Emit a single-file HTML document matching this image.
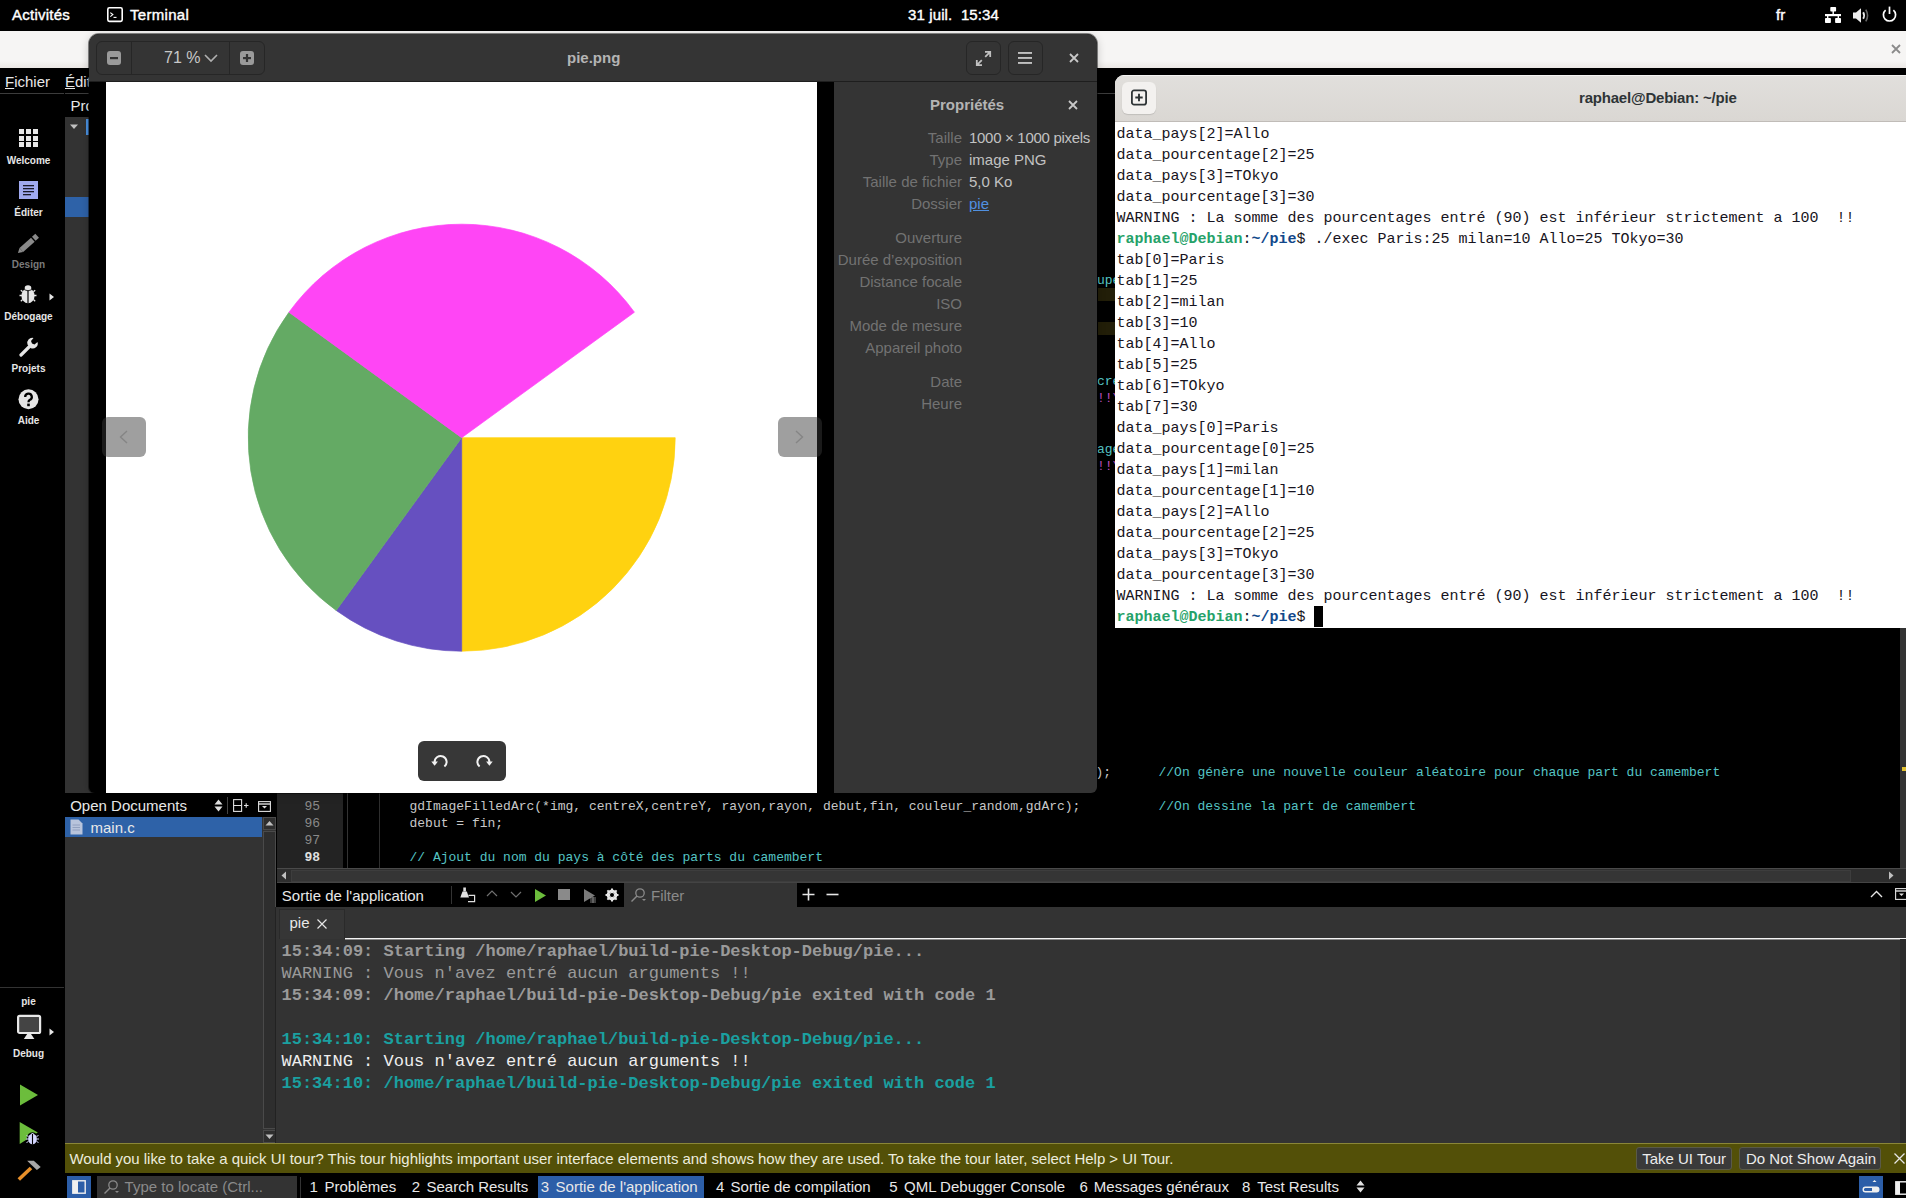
<!DOCTYPE html>
<html><head><meta charset="utf-8">
<style>
*{margin:0;padding:0;box-sizing:border-box}
html,body{width:1906px;height:1198px;overflow:hidden;background:#000;font-family:"Liberation Sans",sans-serif}
.a{position:absolute}
.t{position:absolute;white-space:pre;line-height:1}
.mono{font-family:"Liberation Mono",monospace}
</style></head><body>
<!-- Qt Creator background -->
<div class="a" style="left:0;top:31px;width:1906px;height:37px;background:linear-gradient(#f6f5f4 0,#f6f5f4 30px,#ebe8e5 37px)"></div>
<div class="a" style="left:0;top:68px;width:1906px;height:1130px;background:#000"></div>
<div class="a" style="left:0;top:93px;width:64px;height:1px;background:#3c3c3c"></div><div class="a" style="left:65px;top:93px;width:1841px;height:1px;background:#3c3c3c"></div>
<div class="t" style="left:5px;top:73.8px;font-size:15px;color:#e8e8e8;"><u>F</u>ichier</div><div class="t" style="left:65px;top:73.8px;font-size:15px;color:#e8e8e8;"><u>É</u>dition</div><div class="t" style="left:0;width:57px;text-align:center;top:156.3px;font-size:10px;font-weight:bold;color:#e6e6e6">Welcome</div><div class="t" style="left:0;width:57px;text-align:center;top:208.0px;font-size:10px;font-weight:bold;color:#e6e6e6">Éditer</div><div class="t" style="left:0;width:57px;text-align:center;top:259.9px;font-size:10px;font-weight:bold;color:#7a7a7a">Design</div><div class="t" style="left:0;width:57px;text-align:center;top:312.4px;font-size:10px;font-weight:bold;color:#e6e6e6">Débogage</div><div class="t" style="left:0;width:57px;text-align:center;top:364.1px;font-size:10px;font-weight:bold;color:#e6e6e6">Projets</div><div class="t" style="left:0;width:57px;text-align:center;top:415.7px;font-size:10px;font-weight:bold;color:#e6e6e6">Aide</div>
<div class="a" style="left:19px;top:129.0px;width:5px;height:5px;background:#e6e6e6"></div><div class="a" style="left:26px;top:129.0px;width:5px;height:5px;background:#e6e6e6"></div><div class="a" style="left:33px;top:129.0px;width:5px;height:5px;background:#e6e6e6"></div><div class="a" style="left:19px;top:135.5px;width:5px;height:5px;background:#e6e6e6"></div><div class="a" style="left:26px;top:135.5px;width:5px;height:5px;background:#e6e6e6"></div><div class="a" style="left:33px;top:135.5px;width:5px;height:5px;background:#e6e6e6"></div><div class="a" style="left:19px;top:142.0px;width:5px;height:5px;background:#e6e6e6"></div><div class="a" style="left:26px;top:142.0px;width:5px;height:5px;background:#e6e6e6"></div><div class="a" style="left:33px;top:142.0px;width:5px;height:5px;background:#e6e6e6"></div><div class="a" style="left:19px;top:181px;width:19px;height:18px;background:#a0aaf0"></div><svg class="a" style="left:19px;top:181px" width="19" height="18" viewBox="0 0 19 18" fill="#1a1a2a"><rect x="4" y="4" width="11" height="1.3"/><rect x="4" y="7" width="11" height="1.3"/><rect x="4" y="10" width="11" height="1.3"/><rect x="4" y="13" width="8" height="1.3"/></svg><svg class="a" style="left:14px;top:231px" width="28" height="26" viewBox="0 0 28 26"><g transform="rotate(-42 14 13)" fill="#8a8a8a"><path d="M0.5 13 L5 10.3 V15.7 Z"/><rect x="5" y="10.3" width="15.5" height="5.4"/><rect x="21.8" y="10.3" width="4.5" height="5.4"/></g></svg><svg class="a" style="left:18px;top:284px" width="20" height="20" viewBox="0 0 20 20"><ellipse cx="10" cy="4" rx="3.3" ry="2.8" fill="#e6e6e6"/><ellipse cx="10" cy="11.8" rx="6.6" ry="7.4" fill="#e6e6e6"/><path d="M10 6.2 V19.5" stroke="#000" stroke-width="1.2"/><path d="M6.5 5.8 Q10 7.8 13.5 5.8" fill="none" stroke="#000" stroke-width="0.8"/><path d="M1.5 11.5 H4 M2.8 6.3 L4.6 7.8 M2.8 17.2 L4.6 15.6 M18.5 11.5 H16 M17.2 6.3 L15.4 7.8 M17.2 17.2 L15.4 15.6" stroke="#e6e6e6" stroke-width="1.3"/></svg><svg class="a" style="left:49px;top:293px" width="6" height="8" viewBox="0 0 6 8"><path d="M0.5 0.5 L5 4 L0.5 7.5 Z" fill="#e6e6e6"/></svg><svg class="a" style="left:18px;top:336px" width="21" height="21" viewBox="0 0 21 21"><path d="M3 19 L11.5 10.5" stroke="#e6e6e6" stroke-width="3.2" stroke-linecap="round"/><path d="M9.5 8.5 A5 5 0 0 1 15.5 2 L13 5 L14 7.5 L16.5 8.5 L19.5 6 A5 5 0 0 1 12.5 12 Z" fill="#e6e6e6"/></svg><svg class="a" style="left:18px;top:388.5px" width="21" height="21" viewBox="0 0 21 21"><circle cx="10.5" cy="10.2" r="10" fill="#e6e6e6"/><path d="M7.2 8 A3.3 3.3 0 1 1 11.6 11 Q10.5 11.6 10.5 13.2" fill="none" stroke="#000" stroke-width="2.3"/><rect x="9.2" y="14.6" width="2.6" height="2.6" fill="#000"/></svg>
<div class="a" style="left:0;top:987px;width:64px;height:1px;background:#333"></div><div class="t" style="left:0;width:57px;text-align:center;top:996.5px;font-size:10px;font-weight:bold;color:#e6e6e6">pie</div><svg class="a" style="left:16px;top:1014px" width="26" height="26" viewBox="0 0 26 26"><rect x="2.1" y="1.8" width="22" height="17.2" rx="1.6" fill="#444" stroke="#e8e8e8" stroke-width="2.2"/><path d="M7.8 25 L11.2 20 H15 L18.4 25 Z" fill="#e8e8e8"/></svg><svg class="a" style="left:49px;top:1028px" width="6" height="8" viewBox="0 0 6 8"><path d="M0.5 0.5 L5 4 L0.5 7.5 Z" fill="#e6e6e6"/></svg><div class="t" style="left:0;width:57px;text-align:center;top:1049.0px;font-size:10px;font-weight:bold;color:#e6e6e6">Debug</div><svg class="a" style="left:19px;top:1084px" width="20" height="22" viewBox="0 0 20 22"><path d="M1 0.5 L19 11 L1 21.5 Z" fill="#6cbd3c"/></svg><svg class="a" style="left:19px;top:1121px" width="22" height="25" viewBox="0 0 22 25"><path d="M0.7 0.9 L18.8 11.5 L0.7 23 Z" fill="#6cbd3c"/><ellipse cx="13.5" cy="17.5" rx="5.8" ry="6.3" fill="#000"/><ellipse cx="13.5" cy="18" rx="4.4" ry="5.2" fill="#d4d6ff"/><circle cx="13.5" cy="13.5" r="1.6" fill="#d4d6ff"/><path d="M13.5 13 V23.5" stroke="#000" stroke-width="1.1"/><path d="M7.5 14.5 L9.5 15.5 M7 18 H9.3 M7.5 21.5 L9.5 20.5 M19.5 14.5 L17.5 15.5 M20 18 H17.7 M19.5 21.5 L17.5 20.5" stroke="#d4d6ff" stroke-width="1"/></svg><svg class="a" style="left:16px;top:1158px" width="26" height="24" viewBox="0 0 26 24"><path d="M2.8 21.5 L15 10" stroke="#e8902a" stroke-width="3.6"/><path d="M11.2 2.7 H17.8 L24.7 9 L20.9 12 L15 6.5 Z" fill="#a8a8a8"/></svg>
<div class="t" style="left:70.5px;top:98px;font-size:15px;color:#e8e8e8;">Projets</div><div class="a" style="left:65px;top:117px;width:210px;height:676px;background:#333"></div><svg class="a" style="left:69px;top:124px" width="10" height="6" viewBox="0 0 10 6"><path d="M1 0.5 H9 L5 5 Z" fill="#c0c0c0"/></svg><div class="a" style="left:86px;top:119px;width:3px;height:16px;background:#4a90e0"></div><div class="a" style="left:65px;top:197px;width:210px;height:20px;background:#2e62a8"></div>
<div class="t" style="left:70.2px;top:797.8px;font-size:15px;color:#e8e8e8;">Open Documents</div><svg class="a" style="left:214px;top:799px" width="9" height="13" viewBox="0 0 9 13"><path d="M0.5 5.5 L4.5 0.5 L8.5 5.5 Z M0.5 7.5 H8.5 L4.5 12.5 Z" fill="#e0e0e0"/></svg><div class="a" style="left:227px;top:797px;width:1px;height:17px;background:#444"></div><svg class="a" style="left:233px;top:799px" width="16" height="13" viewBox="0 0 16 13" fill="none" stroke="#e0e0e0" stroke-width="1.1"><rect x="0.6" y="0.6" width="8" height="11.8"/><path d="M0.6 6.5 H8.6 M11 6.5 H15.5 M13.2 4.2 V8.8"/></svg><svg class="a" style="left:258px;top:801px" width="13" height="11" viewBox="0 0 13 11"><rect x="0.6" y="0.6" width="11.8" height="9.8" fill="none" stroke="#e0e0e0" stroke-width="1.1"/><path d="M0.6 3 H12.4" stroke="#e0e0e0" stroke-width="1.4"/><path d="M4 5 H9 L6.5 7.5 Z" fill="#e0e0e0"/></svg><div class="a" style="left:65px;top:817px;width:211px;height:326px;background:#333"></div><div class="a" style="left:65px;top:817px;width:197px;height:20px;background:#2e62a8"></div><svg class="a" style="left:70px;top:819px" width="13" height="16" viewBox="0 0 13 16"><path d="M0.5 0.5 H8.5 L12.5 4.5 V15.5 H0.5 Z" fill="#b8c4dc"/><path d="M2.5 6 H10 M2.5 8.5 H10 M2.5 11 H10" stroke="#8898b8" stroke-width="0.8"/></svg><div class="t" style="left:90.5px;top:819.8px;font-size:15px;color:#e8e8e8;">main.c</div><div class="a" style="left:263px;top:817px;width:13px;height:13px;background:#2e2e2e;border:1px solid #4a4a4a"></div><div class="a" style="left:263px;top:831px;width:13px;height:298px;background:#2e2e2e;border:1px solid #4a4a4a"></div><div class="a" style="left:263px;top:1130px;width:13px;height:13px;background:#2e2e2e;border:1px solid #4a4a4a"></div><svg class="a" style="left:264px;top:819px" width="11" height="8" viewBox="0 0 11 8"><path d="M1.5 6.5 H9.5 L5.5 2 Z" fill="#c0c0c0"/></svg><svg class="a" style="left:264px;top:1133px" width="11" height="8" viewBox="0 0 11 8"><path d="M1.5 1.5 H9.5 L5.5 6 Z" fill="#c0c0c0"/></svg>
<div class="a" style="left:277px;top:793px;width:66px;height:75px;background:#232323"></div><div class="a" style="left:347px;top:793px;width:1px;height:75px;background:#333"></div><div class="a" style="left:379px;top:793px;width:1px;height:75px;background:#2e2e2e"></div><div class="t mono" style="left:270px;width:50px;text-align:right;top:799.7px;font-size:13px;color:#8a8a8a;">95</div><div class="t mono" style="left:270px;width:50px;text-align:right;top:816.6px;font-size:13px;color:#8a8a8a;">96</div><div class="t mono" style="left:270px;width:50px;text-align:right;top:833.5px;font-size:13px;color:#8a8a8a;">97</div><div class="t mono" style="left:270px;width:50px;text-align:right;top:850.6px;font-size:13px;color:#e0e0e0;font-weight:bold;">98</div><div class="t mono" style="left:1095.5px;top:765.7px;font-size:13px;color:#c8c8c8;">);</div><div class="t mono" style="left:1158.5px;top:765.7px;font-size:13px;color:#55c4c4;">//On génère une nouvelle couleur aléatoire pour chaque part du camembert</div><div class="t mono" style="left:409.5px;top:799.7px;font-size:13px;color:#c8c8c8;">gdImageFilledArc(*img, centreX,centreY, rayon,rayon, debut,fin, couleur_random,gdArc);</div><div class="t mono" style="left:1158.5px;top:799.7px;font-size:13px;color:#55c4c4;">//On dessine la part de camembert</div><div class="t mono" style="left:409.5px;top:816.6px;font-size:13px;color:#c8c8c8;">debut = fin;</div><div class="t mono" style="left:409.5px;top:850.6px;font-size:13px;color:#55c4c4;">// Ajout du nom du pays à côté des parts du camembert</div><div class="t mono" style="left:1097px;top:274.0px;font-size:13px;color:#55c4c4;">upe</div><div class="a" style="left:1098px;top:288px;width:17px;height:13px;background:#221e08"></div><div class="a" style="left:1098px;top:322px;width:17px;height:13px;background:#221e08"></div><div class="t mono" style="left:1097px;top:375.0px;font-size:13px;color:#55c4c4;">cré</div><div class="t mono" style="left:1097px;top:392.0px;font-size:13px;color:#c050c0;">!!\</div><div class="t mono" style="left:1097px;top:443.0px;font-size:13px;color:#55c4c4;">age</div><div class="t mono" style="left:1097px;top:460.0px;font-size:13px;color:#c050c0;">!!\</div><div class="a" style="left:1900px;top:628px;width:6px;height:240px;background:#333"></div><div class="a" style="left:1902px;top:767px;width:4px;height:4px;background:#e0c030"></div><div class="a" style="left:277px;top:868px;width:1629px;height:15px;background:#2e2e2e;border-top:1px solid #4a4a4a;border-bottom:1px solid #444"></div><div class="a" style="left:291px;top:870px;width:1560px;height:12px;background:#353535;border:1px solid #3d3d3d"></div><svg class="a" style="left:279px;top:870px" width="10" height="11" viewBox="0 0 10 11"><path d="M7 1.5 V9.5 L2.5 5.5 Z" fill="#c0c0c0"/></svg><svg class="a" style="left:1886px;top:870px" width="10" height="11" viewBox="0 0 10 11"><path d="M3 1.5 V9.5 L7.5 5.5 Z" fill="#c0c0c0"/></svg>
<div class="a" style="left:277px;top:883px;width:1629px;height:24px;background:#000"></div><div class="t" style="left:281.8px;top:887.9px;font-size:15px;color:#e8e8e8;">Sortie de l'application</div><div class="a" style="left:451px;top:886px;width:1px;height:18px;background:#333"></div><svg class="a" style="left:460px;top:887px" width="17" height="16" viewBox="0 0 17 16"><rect x="3.3" y="0.5" width="2.6" height="4" fill="#e0e0e0"/><path d="M2.5 4.5 H6.8 L9 10.5 H0.3 Z" fill="#e0e0e0"/><path d="M8.5 8.3 H14.6 V14.6 H8" fill="none" stroke="#e0e0e0" stroke-width="1.2"/></svg><svg class="a" style="left:486px;top:889px" width="12" height="8" viewBox="0 0 12 8"><path d="M1 7 L6 2 L11 7" fill="none" stroke="#707070" stroke-width="1.2"/></svg><svg class="a" style="left:510px;top:891px" width="12" height="8" viewBox="0 0 12 8"><path d="M1 1 L6 6 L11 1" fill="none" stroke="#707070" stroke-width="1.2"/></svg><svg class="a" style="left:534px;top:888px" width="13" height="15" viewBox="0 0 13 15"><path d="M1 1 L12 7.5 L1 14 Z" fill="#6cbd3c"/></svg><div class="a" style="left:558px;top:889px;width:12px;height:11px;background:#8a8a8a"></div><svg class="a" style="left:583px;top:888px" width="14" height="15" viewBox="0 0 14 15"><path d="M1 1 L12 7.5 L1 14 Z" fill="#7a7a7a"/><path d="M7 10 H13 M7 12 H13 M7 14 H13 M10 9 V15" stroke="#999" stroke-width="0.8"/></svg><svg class="a" style="left:605px;top:888px" width="14" height="14" viewBox="0 0 14 14"><circle cx="7" cy="7" r="4.2" fill="none" stroke="#e6e6e6" stroke-width="2.4"/><path d="M7 0.5 V13.5 M0.5 7 H13.5 M2.4 2.4 L11.6 11.6 M11.6 2.4 L2.4 11.6" stroke="#e6e6e6" stroke-width="2"/><circle cx="7" cy="7" r="2" fill="#000"/></svg><div class="a" style="left:624px;top:883px;width:173px;height:24px;background:#333"></div><svg class="a" style="left:630px;top:887px" width="17" height="16" viewBox="0 0 17 16"><circle cx="10" cy="6" r="4.2" fill="none" stroke="#8a8a8a" stroke-width="1.3"/><path d="M7 9 L1.5 14.5" stroke="#8a8a8a" stroke-width="1.5"/><path d="M12 12 H16 L14 14 Z" fill="#8a8a8a"/></svg><div class="t" style="left:651px;top:888.3px;font-size:15px;color:#8a8a8a;">Filter</div><svg class="a" style="left:802px;top:888px" width="13" height="13" viewBox="0 0 13 13"><path d="M6.5 0.5 V12.5 M0.5 6.5 H12.5" stroke="#e6e6e6" stroke-width="1.6"/></svg><svg class="a" style="left:826px;top:888px" width="13" height="13" viewBox="0 0 13 13"><path d="M0.5 6.5 H12.5" stroke="#e6e6e6" stroke-width="1.6"/></svg><svg class="a" style="left:1870px;top:889px" width="13" height="9" viewBox="0 0 13 9"><path d="M1 8 L6.5 2.5 L12 8" fill="none" stroke="#e6e6e6" stroke-width="1.4"/></svg><svg class="a" style="left:1895px;top:888px" width="11" height="12" viewBox="0 0 11 12"><rect x="0.6" y="0.6" width="12" height="10.8" fill="none" stroke="#e0e0e0" stroke-width="1.1"/><path d="M0.6 3 H12" stroke="#e0e0e0" stroke-width="1.4"/><path d="M4 5.5 H9 L6.5 8 Z" fill="#e0e0e0"/></svg>
<div class="a" style="left:276px;top:907px;width:1630px;height:236px;background:#333"></div><div class="a" style="left:275px;top:907px;width:1px;height:236px;background:#222"></div><div class="a" style="left:279px;top:909px;width:66px;height:30px;background:#363636;border:1px solid #2a2a2a;border-bottom:none"></div><div class="t" style="left:289.5px;top:915.3px;font-size:15px;color:#e8e8e8;">pie</div><svg class="a" style="left:316px;top:918px" width="12" height="12" viewBox="0 0 12 12"><path d="M1.5 1.5 L10.5 10.5 M10.5 1.5 L1.5 10.5" stroke="#e6e6e6" stroke-width="1.2"/></svg><div class="a" style="left:345px;top:938px;width:1561px;height:1px;background:#f4f4f4"></div><div class="a" style="left:345px;top:939px;width:1561px;height:1px;background:#888"></div><div class="t mono" style="left:281.5px;top:942.7px;font-size:17px;color:#9a9a9a;font-weight:bold;">15:34:09: Starting /home/raphael/build-pie-Desktop-Debug/pie...</div><div class="t mono" style="left:281.5px;top:964.7px;font-size:17px;color:#9a9a9a;">WARNING : Vous n'avez entré aucun arguments !!</div><div class="t mono" style="left:281.5px;top:986.7px;font-size:17px;color:#9a9a9a;font-weight:bold;">15:34:09: /home/raphael/build-pie-Desktop-Debug/pie exited with code 1</div><div class="t mono" style="left:281.5px;top:1030.8px;font-size:17px;color:#1aa0a0;font-weight:bold;">15:34:10: Starting /home/raphael/build-pie-Desktop-Debug/pie...</div><div class="t mono" style="left:281.5px;top:1052.9px;font-size:17px;color:#eeeeee;">WARNING : Vous n'avez entré aucun arguments !!</div><div class="t mono" style="left:281.5px;top:1074.6px;font-size:17px;color:#1aa0a0;font-weight:bold;">15:34:10: /home/raphael/build-pie-Desktop-Debug/pie exited with code 1</div><div class="a" style="left:1900px;top:939px;width:6px;height:204px;background:#2b2b2b"></div>
<div class="a" style="left:65px;top:1143px;width:1841px;height:30px;background:#535008;border-top:1px solid #8a8638"></div><div class="t" style="left:69.4px;top:1151.1px;font-size:15px;color:#ececdc;letter-spacing:-0.035px">Would you like to take a quick UI tour? This tour highlights important user interface elements and shows how they are used. To take the tour later, select Help &gt; UI Tour.</div><div class="a" style="left:1636px;top:1147px;width:96px;height:23px;background:#3a3a3a;border:1px solid #5a5a48;border-radius:3px"></div><div class="t" style="left:1642.2px;top:1151.1px;font-size:15px;color:#ececec;">Take UI Tour</div><div class="a" style="left:1739px;top:1147px;width:142px;height:23px;background:#3a3a3a;border:1px solid #5a5a48;border-radius:3px"></div><div class="t" style="left:1746px;top:1151.1px;font-size:15px;color:#ececec;">Do Not Show Again</div><svg class="a" style="left:1893px;top:1152px" width="13" height="13" viewBox="0 0 13 13"><path d="M1.5 1.5 L11.5 11.5 M11.5 1.5 L1.5 11.5" stroke="#e6e6e6" stroke-width="1.3"/></svg>
<div class="a" style="left:67px;top:1176px;width:24px;height:22px;background:#2c5ea8"></div><svg class="a" style="left:72px;top:1180px" width="14" height="14" viewBox="0 0 14 14"><rect x="0.8" y="0.8" width="12.4" height="12.4" fill="none" stroke="#f0f0f0" stroke-width="1.4"/><rect x="1" y="1" width="5" height="12" fill="#f0f0f0"/></svg><div class="a" style="left:97px;top:1176px;width:200px;height:22px;background:#333"></div><svg class="a" style="left:103px;top:1179px" width="17" height="16" viewBox="0 0 17 16"><circle cx="10" cy="6" r="4.2" fill="none" stroke="#8a8a8a" stroke-width="1.3"/><path d="M7 9 L1.5 14.5" stroke="#8a8a8a" stroke-width="1.5"/><path d="M12 12 H16 L14 14 Z" fill="#8a8a8a"/></svg><div class="t" style="left:124.6px;top:1179.3px;font-size:15px;color:#8a8a8a;">Type to locate (Ctrl...</div><div class="a" style="left:300px;top:1177px;width:1px;height:21px;background:#333"></div><div class="a" style="left:538px;top:1176px;width:166px;height:22px;background:#2c5ea8"></div><div class="t" style="left:309.4px;top:1179.3px;font-size:15px;color:#e8e8e8;">1</div><div class="t" style="left:324.5px;top:1179.3px;font-size:15px;color:#e8e8e8;">Problèmes</div><div class="t" style="left:411.7px;top:1179.3px;font-size:15px;color:#e8e8e8;">2</div><div class="t" style="left:426.5px;top:1179.3px;font-size:15px;color:#e8e8e8;">Search Results</div><div class="t" style="left:540.8px;top:1179.3px;font-size:15px;color:#e8e8e8;">3</div><div class="t" style="left:555.6px;top:1179.3px;font-size:15px;color:#e8e8e8;">Sortie de l'application</div><div class="t" style="left:716px;top:1179.3px;font-size:15px;color:#e8e8e8;">4</div><div class="t" style="left:730.6px;top:1179.3px;font-size:15px;color:#e8e8e8;">Sortie de compilation</div><div class="t" style="left:889.2px;top:1179.3px;font-size:15px;color:#e8e8e8;">5</div><div class="t" style="left:904px;top:1179.3px;font-size:15px;color:#e8e8e8;">QML Debugger Console</div><div class="t" style="left:1079.4px;top:1179.3px;font-size:15px;color:#e8e8e8;">6</div><div class="t" style="left:1093.8px;top:1179.3px;font-size:15px;color:#e8e8e8;">Messages généraux</div><div class="t" style="left:1242px;top:1179.3px;font-size:15px;color:#e8e8e8;">8</div><div class="t" style="left:1257.2px;top:1179.3px;font-size:15px;color:#e8e8e8;">Test Results</div><svg class="a" style="left:1356px;top:1180px" width="9" height="13" viewBox="0 0 9 13"><path d="M0.5 5.5 L4.5 0.5 L8.5 5.5 Z M0.5 7.5 H8.5 L4.5 12.5 Z" fill="#e0e0e0"/></svg><div class="a" style="left:1859px;top:1176px;width:24px;height:22px;background:#2c5ea8"></div><svg class="a" style="left:1862px;top:1179px" width="18" height="16" viewBox="0 0 18 16"><path d="M10.5 3 H14.5 L12.5 1 Z" fill="#f0f0f0"/><rect x="1.2" y="8.2" width="15.6" height="4.6" rx="2.2" fill="none" stroke="#f0f0f0" stroke-width="1.4"/><rect x="10" y="9" width="6" height="3" fill="#f0f0f0"/></svg><svg class="a" style="left:1895px;top:1181px" width="11" height="14" viewBox="0 0 11 14"><rect x="0.8" y="0.8" width="12" height="12.4" fill="none" stroke="#f0f0f0" stroke-width="1.4"/><rect x="1" y="1" width="4" height="12" fill="#f0f0f0"/></svg>
<!-- Terminal window -->
<div class="a" style="left:1115px;top:75px;width:791px;height:553px;background:#fff;border-top-left-radius:9px;overflow:hidden">
  <div class="a" style="left:0;top:0;width:791px;height:47px;background:linear-gradient(#e1dfdc,#dad7d3);border-top:1px solid #f4f3f2;border-bottom:1px solid #c0bcb8"></div>
  <div class="a" style="left:7px;top:7px;width:34px;height:32px;background:#f3f1ef;border-radius:6px;box-shadow:0 1px 1px rgba(0,0,0,0.12)"></div>
  <svg class="a" style="left:15px;top:14px" width="18" height="18" viewBox="0 0 18 18"><rect x="1.9" y="1.4" width="14.2" height="14.2" rx="2.2" fill="none" stroke="#2e3436" stroke-width="1.8"/><path d="M9 4.8 V12.2 M5.3 8.5 H12.7" stroke="#2e3436" stroke-width="1.9"/></svg>
  <div class="t" style="left:464px;top:14.9px;font-size:15px;font-weight:bold;color:#2e3436;letter-spacing:-0.2px">raphael@Debian: ~/pie</div>
  <pre class="a mono" style="left:1.5px;top:49.3px;font-size:15px;line-height:21px;color:#171421;margin:0">data_pays[2]=Allo
data_pourcentage[2]=25
data_pays[3]=TOkyo
data_pourcentage[3]=30
WARNING : La somme des pourcentages entré (90) est inférieur strictement a 100  !!
<b style="color:#26a269">raphael@Debian</b>:<b style="color:#12488b">~/pie</b>$ ./exec Paris:25 milan=10 Allo=25 TOkyo=30
tab[0]=Paris
tab[1]=25
tab[2]=milan
tab[3]=10
tab[4]=Allo
tab[5]=25
tab[6]=TOkyo
tab[7]=30
data_pays[0]=Paris
data_pourcentage[0]=25
data_pays[1]=milan
data_pourcentage[1]=10
data_pays[2]=Allo
data_pourcentage[2]=25
data_pays[3]=TOkyo
data_pourcentage[3]=30
WARNING : La somme des pourcentages entré (90) est inférieur strictement a 100  !!
<b style="color:#26a269">raphael@Debian</b>:<b style="color:#12488b">~/pie</b>$</pre>
  <div class="a" style="left:199px;top:531px;width:9px;height:21px;background:#000"></div>
</div>
<!-- Image viewer window -->
<div class="a" style="left:89px;top:34px;width:1008px;height:759px;background:#000;border-radius:10px 10px 6px 6px;overflow:hidden;box-shadow:0 0 0 1px rgba(0,0,0,0.45),0 2px 10px rgba(0,0,0,0.22)">
  <div class="a" style="left:0;top:0;width:1008px;height:48px;background:#343434;border-bottom:1px solid #1e1e1e"></div>
  <!-- zoom group -->
  <div class="a" style="left:7px;top:7px;width:169px;height:34px;border:1px solid #262626;border-radius:6px"></div>
  <div class="a" style="left:42px;top:8px;width:1px;height:32px;background:#262626"></div>
  <div class="a" style="left:140px;top:8px;width:1px;height:32px;background:#262626"></div>
  <svg class="a" style="left:17px;top:16px" width="16" height="16" viewBox="0 0 16 16"><rect x="1" y="1" width="14" height="14" rx="3" fill="#9a9a9a"/><rect x="4" y="7" width="8" height="2.2" fill="#343434"/></svg>
  <div class="t" style="left:75px;top:16px;font-size:16px;color:#c8c8c8">71 %</div>
  <svg class="a" style="left:114px;top:18px" width="16" height="12" viewBox="0 0 16 12"><path d="M2 3 L8 9 L14 3" fill="none" stroke="#b0b0b0" stroke-width="1.6"/></svg>
  <svg class="a" style="left:150px;top:16px" width="16" height="16" viewBox="0 0 16 16"><rect x="1" y="1" width="14" height="14" rx="3" fill="#9a9a9a"/><rect x="4" y="7" width="8" height="2.2" fill="#343434"/><rect x="6.9" y="4" width="2.2" height="8" fill="#343434"/></svg>
  <div class="t" style="left:478px;top:16px;font-size:15px;font-weight:bold;color:#b4b4b4">pie.png</div>
  <!-- right header buttons -->
  <div class="a" style="left:877px;top:7px;width:35px;height:34px;border:1px solid #262626;border-radius:6px"></div>
  <svg class="a" style="left:886px;top:16px" width="17" height="17" viewBox="0 0 17 17" fill="none" stroke="#c0c0c0" stroke-width="1.8"><path d="M10 1.8 H15.2 V7 M15.2 1.8 L10.2 6.8 M1.8 10 V15.2 H7 M1.8 15.2 L6.8 10.2"/></svg>
  <div class="a" style="left:919px;top:7px;width:35px;height:34px;border:1px solid #262626;border-radius:6px"></div>
  <svg class="a" style="left:928px;top:16px" width="16" height="16" viewBox="0 0 16 16" fill="#c0c0c0"><rect x="1" y="2" width="14" height="1.9"/><rect x="1" y="7" width="14" height="1.9"/><rect x="1" y="12" width="14" height="1.9"/></svg>
  <svg class="a" style="left:980px;top:19px" width="10" height="10" viewBox="0 0 10 10"><path d="M1 1 L9 9 M9 1 L1 9" stroke="#c8c8c8" stroke-width="1.8"/></svg>
  <!-- image -->
  <div class="a" style="left:17px;top:48px;width:711px;height:711px;background:#fff">
    <svg class="a" style="left:0;top:0" width="711" height="711"><path d="M355.70 355.70 L569.20 355.70 A213.5 213.5 0 0 1 355.70 569.20 Z" fill="#ffd210" stroke="#ffd210" stroke-width="0.7" stroke-linejoin="bevel"/><path d="M355.70 355.70 L355.70 569.20 A213.5 213.5 0 0 1 230.21 528.43 Z" fill="#6650c0" stroke="#6650c0" stroke-width="0.7" stroke-linejoin="bevel"/><path d="M355.70 355.70 L230.21 528.43 A213.5 213.5 0 0 1 182.97 230.21 Z" fill="#64aa64" stroke="#64aa64" stroke-width="0.7" stroke-linejoin="bevel"/><path d="M355.70 355.70 L182.97 230.21 A213.5 213.5 0 0 1 528.43 230.21 Z" fill="#ff45f5" stroke="#ff45f5" stroke-width="0.7" stroke-linejoin="bevel"/></svg>
  </div>
  <!-- nav buttons -->
  <div class="a" style="left:13px;top:383px;width:44px;height:40px;background:rgba(54,54,54,0.48);border-radius:6px"></div>
  <svg class="a" style="left:29px;top:394px" width="12" height="18" viewBox="0 0 12 18"><path d="M9 3 L2.5 9 L9 15" fill="none" stroke="#858585" stroke-width="1.4"/></svg>
  <div class="a" style="left:689px;top:383px;width:44px;height:40px;background:rgba(54,54,54,0.48);border-radius:6px"></div>
  <svg class="a" style="left:704px;top:394px" width="12" height="18" viewBox="0 0 12 18"><path d="M3 3 L9.5 9 L3 15" fill="none" stroke="#858585" stroke-width="1.4"/></svg>
  <!-- rotate group -->
  <div class="a" style="left:329px;top:707px;width:88px;height:40px;background:#373737;border-radius:6px"></div>
  <svg class="a" style="left:342px;top:719px" width="18" height="16" viewBox="0 0 18 16"><path d="M3.6 9.2 A6 6 0 1 1 13.4 13.6" fill="none" stroke="#f2f2f2" stroke-width="2"/><path d="M0.3 8.6 H6.9 L3.6 12.8 Z" fill="#f2f2f2"/></svg>
  <svg class="a" style="left:386px;top:719px" width="18" height="16" viewBox="0 0 18 16"><path d="M14.4 9.2 A6 6 0 1 0 4.6 13.6" fill="none" stroke="#f2f2f2" stroke-width="2"/><path d="M17.7 8.6 H11.1 L14.4 12.8 Z" fill="#f2f2f2"/></svg>
  <!-- properties panel -->
  <div class="a" style="left:745px;top:48px;width:263px;height:711px;background:#343434">
<div class="t" style="right:135px;top:48.3px;font-size:15px;color:#727272">Taille</div><div class="t" style="left:135px;top:48.3px;font-size:15px;color:#c2c2c2;letter-spacing:-0.3px">1000 × 1000 pixels</div><div class="t" style="right:135px;top:70.3px;font-size:15px;color:#727272">Type</div><div class="t" style="left:135px;top:70.3px;font-size:15px;color:#c2c2c2">image PNG</div><div class="t" style="right:135px;top:92.3px;font-size:15px;color:#727272">Taille de fichier</div><div class="t" style="left:135px;top:92.3px;font-size:15px;color:#c2c2c2">5,0 Ko</div><div class="t" style="right:135px;top:114.3px;font-size:15px;color:#727272">Dossier</div><div class="t" style="right:135px;top:148.3px;font-size:15px;color:#727272">Ouverture</div><div class="t" style="right:135px;top:170.3px;font-size:15px;color:#727272">Durée d’exposition</div><div class="t" style="right:135px;top:192.3px;font-size:15px;color:#727272">Distance focale</div><div class="t" style="right:135px;top:214.3px;font-size:15px;color:#727272">ISO</div><div class="t" style="right:135px;top:236.3px;font-size:15px;color:#727272">Mode de mesure</div><div class="t" style="right:135px;top:258.3px;font-size:15px;color:#727272">Appareil photo</div><div class="t" style="right:135px;top:292.3px;font-size:15px;color:#727272">Date</div><div class="t" style="right:135px;top:314.3px;font-size:15px;color:#727272">Heure</div><div class="t" style="left:135px;top:114.3px;font-size:15px;color:#5090e0;text-decoration:underline">pie</div><div class="t" style="left:96px;top:15.3px;font-size:15px;font-weight:bold;color:#b4b4b4">Propriétés</div><svg class="a" style="left:234px;top:18px" width="10" height="10" viewBox="0 0 10 10"><path d="M1 1 L9 9 M9 1 L1 9" stroke="#c8c8c8" stroke-width="1.8"/></svg>
  </div>
</div>
<!-- top bar -->
<div class="a" style="left:0;top:0;width:1906px;height:31px;background:#000;color:#fff">
  <div class="t" style="left:12px;top:7px;font-size:15px;letter-spacing:0.25px;-webkit-text-stroke:0.4px #fff">Activités</div>
  <svg class="a" style="left:106px;top:6px" width="18" height="18" viewBox="0 0 18 18"><rect x="1.8" y="1.8" width="14.4" height="13.6" rx="1.6" fill="none" stroke="#fff" stroke-width="1.6"/><path d="M4.3 6.6 L6.8 8.6 L4.3 10.6" fill="none" stroke="#fff" stroke-width="1.2"/><path d="M7.5 11.4 H10.5" stroke="#fff" stroke-width="1.1"/></svg>
  <div class="t" style="left:130px;top:7px;font-size:15px;letter-spacing:0.3px;-webkit-text-stroke:0.4px #fff">Terminal</div>
  <div class="t" style="left:908px;top:7px;font-size:15px;letter-spacing:0.12px;-webkit-text-stroke:0.4px #fff">31 juil.  15:34</div>
  <div class="t" style="left:1776px;top:7px;font-size:15px;-webkit-text-stroke:0.4px #fff">fr</div>
  <svg class="a" style="left:1824px;top:6px" width="18" height="18" viewBox="0 0 18 18" fill="#fff"><rect x="6.3" y="1" width="5.8" height="4.5" rx="0.8"/><rect x="8.5" y="5" width="1.4" height="4"/><rect x="1" y="8" width="16" height="2.2"/><rect x="3" y="9" width="1.4" height="4"/><rect x="13.6" y="9" width="1.4" height="4"/><rect x="1" y="12" width="5.9" height="5" rx="0.8"/><rect x="11.1" y="12" width="5.9" height="5" rx="0.8"/></svg>
  <svg class="a" style="left:1852px;top:7px" width="18" height="17" viewBox="0 0 18 17"><path d="M1 5.5 H4 L9 1.2 V15.8 L4 11.5 H1 Z" fill="#eee"/><path d="M11.2 5.3 Q13 8.5 11.2 11.7" fill="none" stroke="#eee" stroke-width="1.8"/><path d="M13.8 2.6 Q17.3 8.5 13.8 14.4" fill="none" stroke="#666" stroke-width="1.6"/></svg>
  <svg class="a" style="left:1881px;top:6px" width="17" height="17" viewBox="0 0 17 17"><path d="M4.6 4.2 A6.1 6.1 0 1 0 12.4 4.2" fill="none" stroke="#fff" stroke-width="1.7"/><rect x="7.65" y="0.6" width="1.7" height="7.4" fill="#fff"/></svg>
</div>
<!-- gnome title strip close -->
<svg class="a" style="left:1891px;top:44px" width="10" height="10" viewBox="0 0 10 10"><path d="M1 1 L9 9 M9 1 L1 9" stroke="#8a8a8a" stroke-width="1.8"/></svg>
</body></html>
